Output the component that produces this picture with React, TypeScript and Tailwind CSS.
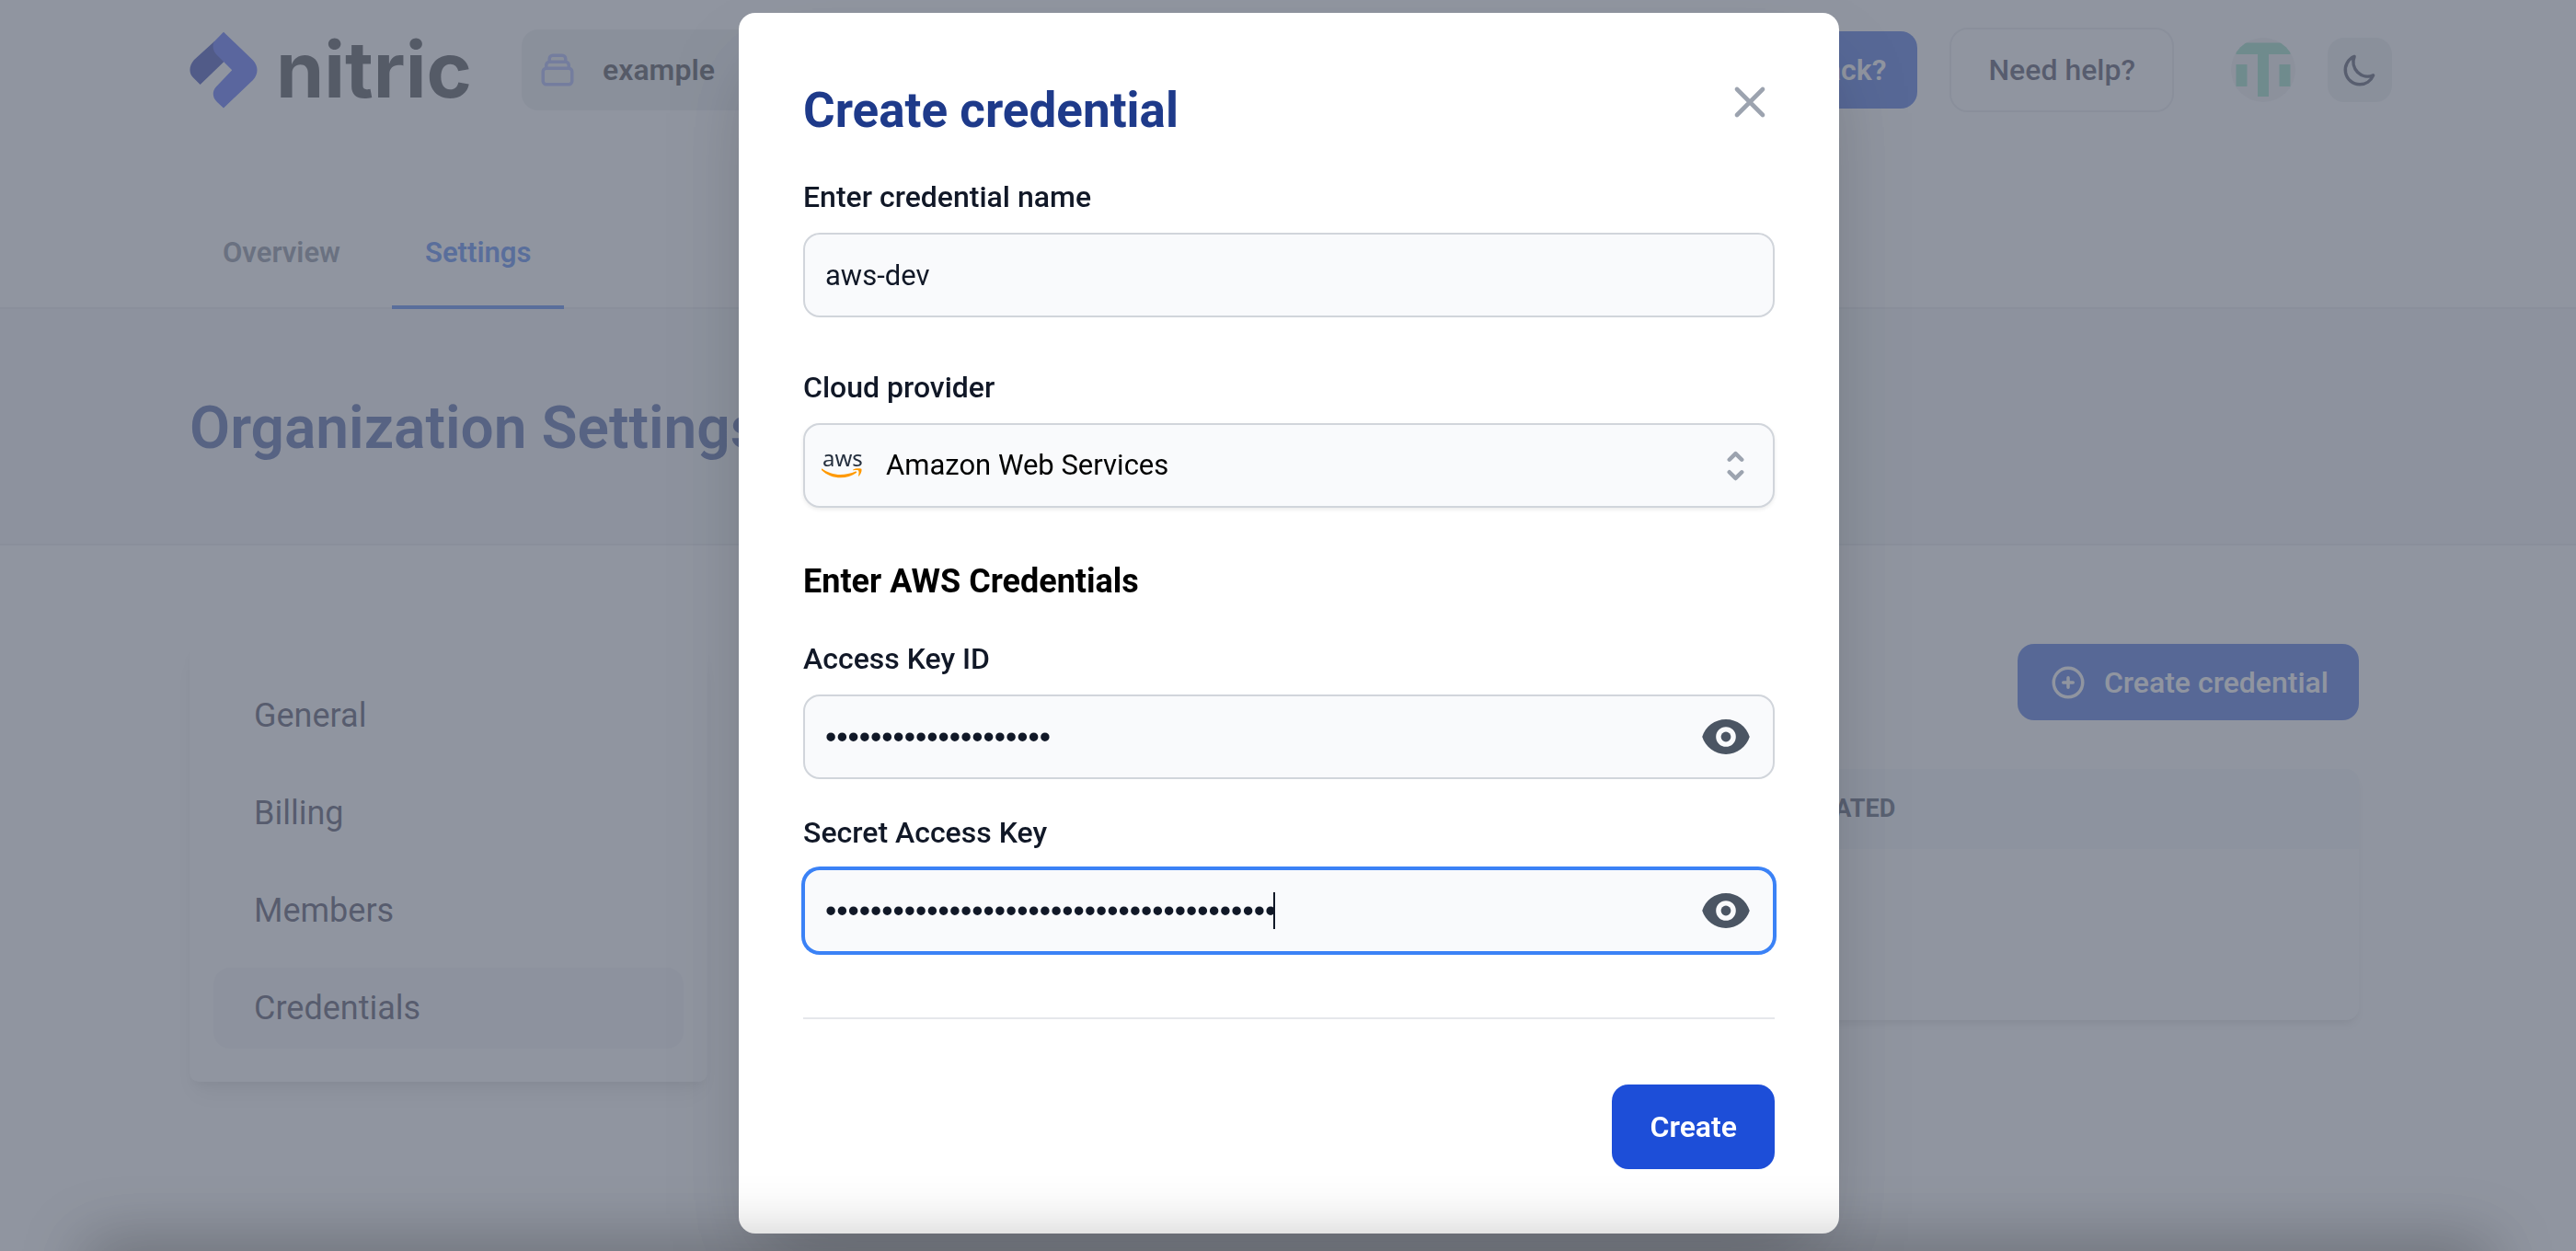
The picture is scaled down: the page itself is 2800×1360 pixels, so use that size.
import { useState, type ReactNode } from "react";

const tabs = [
  { label: "Overview", active: false },
  { label: "Settings", active: true },
];

const sections = [
  { label: "General", active: false },
  { label: "Billing", active: false },
  { label: "Members", active: false },
  { label: "Credentials", active: true },
];

function OutlineIcon({ d }: { d: string }) {
  return (
    <svg
      viewBox="0 0 24 24"
      className="size-[42px] shrink-0"
      fill="none"
      stroke="currentColor"
      strokeWidth="2"
      strokeLinecap="round"
      strokeLinejoin="round"
      aria-hidden="true"
    >
      <path d={d} />
    </svg>
  );
}

function NitricMark() {
  return (
    <svg viewBox="0 0 74 84" className="h-[84px] w-[74px] shrink-0" aria-hidden="true">
      <path fill="#071aa0" d="M27 11L5 31C-1 38 -1 46 4.600 51L11.600 58L37 33.500L40 20Z" />
      <path
        fill="#2846f5"
        d="M37 .7L69 31.500C75 38 75 46.500 69 53L37 83.500L30 77C24.500 72 24.500 65 29 60.300L46.200 42.300L29 25C25.500 21 24.500 15 27 11Z"
      />
    </svg>
  );
}

function Avatar() {
  return (
    <svg viewBox="0 0 70 70" className="size-[70px]" role="img" aria-label="Account">
      <clipPath id="avatar-clip">
        <circle cx="35" cy="35" r="35" />
      </clipPath>
      <g clipPath="url(#avatar-clip)">
        <rect width="70" height="70" fill="#eeeef0" />
        <g fill="#7bd6b4">
          <rect x="5.500" y="5.500" width="59" height="12.500" />
          <rect x="29" y="17" width="12" height="47" />
          <rect x="5.500" y="29" width="12" height="24" />
          <rect x="52.500" y="29" width="12" height="24" />
        </g>
      </g>
    </svg>
  );
}

function AwsLogo() {
  return (
    <svg viewBox="0 0 44 32" className="h-[32px] w-[44px]" aria-hidden="true">
      <text x="1" y="17" fontFamily="Noto Sans, sans-serif" fontSize="24" fill="#252f3e">
        aws
      </text>
      <path
        fill="#ff9900"
        d="M.6 19.500C6 23.500 13 26 20.500 26C26 26 32 24.800 37 22.600C37.900 22.200 38.600 23.200 37.800 23.900C33.200 27.400 26.600 29.300 20.800 29.300C12.800 29.300 5.500 26.300 .2 21.200C-.4 20.500 -.1 19.100 .6 19.500Z"
      />
      <path
        fill="#ff9900"
        d="M40 21.500C39.300 20.700 36 21.100 34.400 21.300C34 21.300 33.900 20.900 34.300 20.600C36.900 18.700 41.300 19.200 43 19.600C44.300 20 43.300 25.200 40.600 27.500C40.200 27.800 39.800 27.600 40 27.200C40.600 25.700 40.900 22.500 40 21.500Z"
      />
    </svg>
  );
}

function Field({ id, label, children }: { id: string; label: string; children: ReactNode }) {
  return (
    <div className="flex flex-col gap-[17px]">
      <label htmlFor={id} className="text-[32px] leading-[44px] font-medium text-[#111827]">
        {label}
      </label>
      {children}
    </div>
  );
}

function SecretInput({ id, initial, focused }: { id: string; initial: string; focused?: boolean }) {
  const [value, setValue] = useState(initial);
  const [shown, setShown] = useState(false);
  return (
    <div className="relative">
      <input
        id={id}
        type={shown ? "text" : "password"}
        value={value}
        onChange={(e) => setValue(e.target.value)}
        className={
          focused
            ? "h-[92px] w-full rounded-[18px] border-2 border-[#3b82f6] bg-[#f9fafc] pr-[96px] pl-[22px] font-[Liberation_Sans,sans-serif] text-[35px] text-[#111827] ring-2 ring-[#3b82f6] outline-none"
            : "h-[92px] w-full rounded-[18px] border-2 border-[#d1d5db] bg-[#f9fafc] pr-[96px] pl-[22px] font-[Liberation_Sans,sans-serif] text-[35px] text-[#111827] outline-none"
        }
      />
      {focused && <span className="absolute top-[26px] left-[511px] h-[40px] w-[2px] bg-[#111827]" />}
      <button
        type="button"
        aria-label="Show value"
        onClick={() => setShown(!shown)}
        className="absolute inset-y-0 right-[26px] flex items-center text-[#4b5563]"
      >
        <svg viewBox="0 0 20 20" className="size-[54px]" fill="currentColor" aria-hidden="true">
          <path d="M10 12a2 2 0 1 0 0-4 2 2 0 0 0 0 4z" />
          <path
            fillRule="evenodd"
            clipRule="evenodd"
            d="M.458 10C1.732 5.943 5.522 3 10 3s8.268 2.943 9.542 7c-1.274 4.057-5.064 7-9.542 7S1.732 14.057.458 10zM14 10a4 4 0 1 1-8 0 4 4 0 0 1 8 0z"
          />
        </svg>
      </button>
    </div>
  );
}

function Page() {
  return (
    <div className="min-h-screen bg-white">
      <header className="flex h-[152px] items-center pr-[200px] pl-[206px]">
        <a href="#" className="flex w-[308px] items-center gap-[20px]">
          <NitricMark />
          <span className="font-[Inter,sans-serif] text-[84px] leading-[84px] font-bold text-[#16181f]">nitric</span>
        </a>
        <button
          type="button"
          className="ml-[53px] flex h-[88px] w-[320px] items-center gap-[28px] rounded-[18px] bg-[#e6e9ec] pl-[18px] text-[32px] font-semibold text-[#14151d]"
        >
          <span className="text-[#8fa0f5]">
            <OutlineIcon d="M19 11H5m14 0a2 2 0 0 1 2 2v6a2 2 0 0 1-2 2H5a2 2 0 0 1-2-2v-6a2 2 0 0 1 2-2m14 0V9a2 2 0 0 0-2-2M5 11V9a2 2 0 0 1 2-2m0 0V5a2 2 0 0 1 2-2h6a2 2 0 0 1 2 2v2M7 7h10" />
          </span>
          example
        </button>
        <div className="ml-auto flex items-center gap-[35px]">
          <button
            type="button"
            className="h-[84px] rounded-[18px] bg-[#1d4ed8] px-[34px] text-[32px] font-semibold text-white"
          >
            Feedback?
          </button>
          <button
            type="button"
            className="h-[92px] rounded-[20px] border-2 border-gray-200 px-[40px] text-[32px] font-medium text-[#1e1f38]"
          >
            Need help?
          </button>
          <div className="ml-[27px]">
            <Avatar />
          </div>
          <button
            type="button"
            aria-label="Dark mode"
            className="flex size-[70px] items-center justify-center rounded-[18px] bg-[#e6e9ec] text-[#20263c]"
          >
            <OutlineIcon d="M20.354 15.354A9 9 0 0 1 8.646 3.646 9.003 9.003 0 0 0 12 21a9.003 9.003 0 0 0 8.354-5.646z" />
          </button>
        </div>
      </header>

      <nav className="flex h-[184px] items-end gap-[20px] border-b-2 border-gray-200 pl-[206px]">
        {tabs.map((tab) => (
          <a
            key={tab.label}
            href="#"
            aria-current={tab.active ? "page" : undefined}
            className={
              tab.active
                ? "-mb-[2px] border-b-4 border-[#2563eb] px-[36px] pb-[35px] text-[31px] leading-[44px] font-semibold text-[#2563eb]"
                : "-mb-[2px] border-b-4 border-transparent px-[36px] pb-[35px] text-[31px] leading-[44px] font-semibold text-gray-500"
            }
          >
            {tab.label}
          </a>
        ))}
      </nav>

      <div className="border-b-2 border-gray-200 bg-gray-100 pt-[90px] pb-[85px] pl-[206px]">
        <h1 className="text-[64px] leading-[80px] font-semibold text-[#1e3a8a]">Organization Settings</h1>
      </div>

      <main className="flex items-start gap-[69px] pt-[105px] pr-[236px] pl-[206px]">
        <aside className="w-[563px] shrink-0 rounded-[10px] bg-white px-[26px] py-[36px] shadow-[0_18px_26px_-5px_rgba(0,0,0,0.1),0_7px_11px_-4px_rgba(0,0,0,0.1)]">
          <ul className="flex flex-col gap-[18px]">
            {sections.map((item) => (
              <li key={item.label}>
                <a
                  href="#"
                  className={
                    item.active
                      ? "flex h-[88px] items-center rounded-[18px] bg-gray-100 px-[44px] text-[36px] text-[#1c1d3a]"
                      : "flex h-[88px] items-center rounded-[18px] px-[44px] text-[36px] text-[#1c1d3a]"
                  }
                >
                  {item.label}
                </a>
              </li>
            ))}
          </ul>
        </aside>
        <section className="flex min-w-0 flex-1 flex-col gap-[53px] pt-[2px]">
          <button
            type="button"
            className="flex h-[83px] items-center gap-[18px] self-end rounded-[18px] bg-[#1d4ed8] pr-[33px] pl-[34px] text-[32px] font-medium text-white"
          >
            <OutlineIcon d="M12 9v3m0 0v3m0-3h3m-3 0H9m12 0a9 9 0 1 1-18 0 9 9 0 0 1 18 0z" />
            Create credential
          </button>
          <div className="overflow-hidden rounded-[14px] shadow-[0_7px_11px_-2px_rgba(0,0,0,0.1),0_4px_7px_-4px_rgba(0,0,0,0.1)]">
            <table className="w-full table-fixed text-left">
              <thead className="bg-slate-100 text-[27px] text-[#27304a] uppercase">
                <tr className="h-[87px]">
                  <th scope="col" className="w-[62%] px-[36px] font-bold">
                    Name
                  </th>
                  <th scope="col" className="px-[36px] font-bold">
                    Created
                  </th>
                </tr>
              </thead>
              <tbody>
                <tr className="h-[186px]">
                  <td />
                  <td />
                </tr>
              </tbody>
            </table>
          </div>
        </section>
      </main>
    </div>
  );
}

export default function App() {
  const [name, setName] = useState("aws-dev");
  return (
    <div className="font-[Roboto,sans-serif]">
      <Page />
      <div className="fixed inset-0 flex items-start justify-center overflow-hidden bg-[#6b7280]/75 pt-[14px] pl-[2px]">
        <div
          role="dialog"
          aria-modal="true"
          aria-labelledby="dialog-title"
          className="relative w-full max-w-[1196px] rounded-[18px] bg-white p-[70px] shadow-[0_44px_88px_-21px_rgba(0,0,0,0.25)]"
        >
          <h2 id="dialog-title" className="text-[53px] leading-[72px] font-bold text-[#1e3a8a]">
            Create credential
          </h2>
          <button type="button" aria-label="Close" className="absolute top-[69px] right-[69px] text-[#9ca3af]">
            <svg
              viewBox="0 0 24 24"
              className="size-[56px]"
              fill="none"
              stroke="currentColor"
              strokeWidth="2"
              strokeLinecap="round"
              aria-hidden="true"
            >
              <path d="M6 18L18 6M6 6l12 12" />
            </svg>
          </button>
          <form className="mt-[36px] flex flex-col" onSubmit={(e) => e.preventDefault()}>
            <div className="flex flex-col gap-[54px]">
              <Field id="name" label="Enter credential name">
                <input
                  id="name"
                  value={name}
                  onChange={(e) => setName(e.target.value)}
                  className="h-[92px] w-full rounded-[18px] border-2 border-[#d1d5db] bg-[#f9fafc] px-[22px] text-[31px] text-[#111827] outline-none"
                />
              </Field>
              <Field id="provider" label="Cloud provider">
                <div className="relative">
                  <select
                    id="provider"
                    className="h-[92px] w-full appearance-none rounded-[18px] border-2 border-[#d1d5db] bg-[#f9fafc] pr-[80px] pl-[88px] text-[31px] text-black shadow-[0_2px_4px_rgba(0,0,0,0.08)] outline-none"
                  >
                    <option>Amazon Web Services</option>
                  </select>
                  <span className="pointer-events-none absolute inset-y-0 left-[20px] flex items-center">
                    <AwsLogo />
                  </span>
                  <span className="pointer-events-none absolute inset-y-0 right-[20px] flex items-center text-[#9ca3af]">
                    <svg viewBox="0 0 20 20" className="size-[45px]" fill="currentColor" aria-hidden="true">
                      <path
                        fillRule="evenodd"
                        d="M10 3a1 1 0 0 1 .707.293l3 3a1 1 0 0 1-1.414 1.414L10 5.414 7.707 7.707a1 1 0 0 1-1.414-1.414l3-3A1 1 0 0 1 10 3zm-3.707 9.293a1 1 0 0 1 1.414 0L10 14.586l2.293-2.293a1 1 0 0 1 1.414 1.414l-3 3a1 1 0 0 1-1.414 0l-3-3a1 1 0 0 1 0-1.414z"
                      />
                    </svg>
                  </span>
                </div>
              </Field>
              <h3 className="text-[36px] leading-[52px] font-bold text-black">Enter AWS Credentials</h3>
            </div>
            <div className="mt-[36px] flex flex-col gap-[36px]">
              <Field id="access-key" label="Access Key ID">
                <SecretInput id="access-key" initial="AKIAXXXXXXXXXXXXXXXX" />
              </Field>
              <Field id="secret-key" label="Secret Access Key">
                <SecretInput id="secret-key" initial="XXXXXXXXXXXXXXXXXXXXXXXXXXXXXXXXXXXXXXXX" focused />
              </Field>
            </div>
            <div className="mt-[70px] flex justify-end border-t-2 border-gray-200 pt-[71px]">
              <button
                type="submit"
                className="h-[92px] rounded-[18px] bg-[#1d4ed8] px-[41px] text-[32px] font-semibold text-white"
              >
                Create
              </button>
            </div>
          </form>
        </div>
      </div>
      <div className="pointer-events-none fixed inset-x-[100px] top-full h-[40px] shadow-[0_0_70px_8px_rgba(0,0,0,0.3)]" />
    </div>
  );
}
